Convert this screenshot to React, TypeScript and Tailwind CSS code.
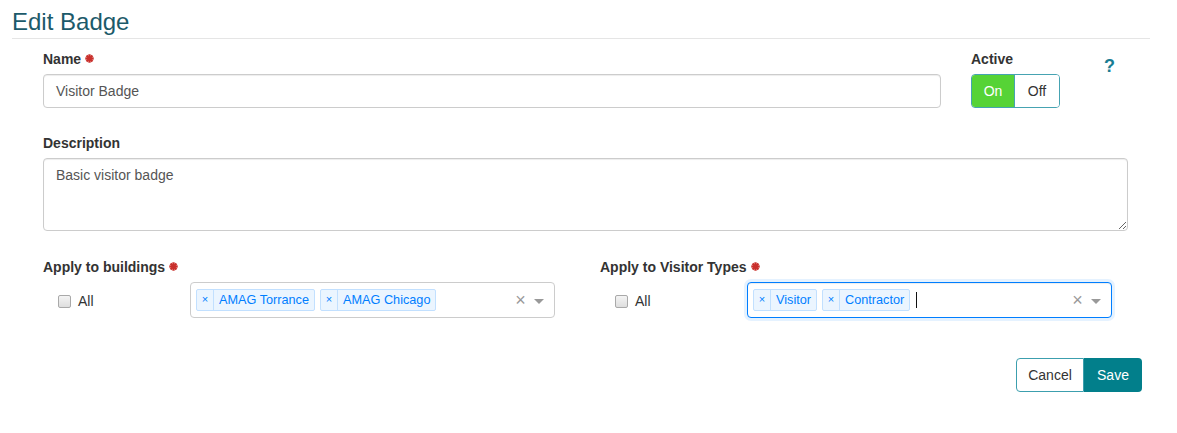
import React from "react";

function Star() {
  return (
    <svg width="9" height="9" viewBox="0 0 10 10" className="inline-block ml-[4px] mb-[1px]">
      <g stroke="#c9302c" strokeWidth="2.6" strokeLinecap="butt">
        <line x1="5" y1="0.3" x2="5" y2="9.7" />
        <line x1="0.3" y1="5" x2="9.7" y2="5" />
        <line x1="1.7" y1="1.7" x2="8.3" y2="8.3" />
        <line x1="8.3" y1="1.7" x2="1.7" y2="8.3" />
      </g>
    </svg>
  );
}

function Label({ children, star }: { children: React.ReactNode; star?: boolean }) {
  return (
    <div className="text-[14px] font-bold leading-[20px] mb-[5px] text-[#333] flex items-center">
      {children}
      {star && <Star />}
    </div>
  );
}

function Tag({ text }: { text: string }) {
  return (
    <div className="flex h-[22px] items-stretch bg-[#ebf5ff] border border-[#c2e0ff] rounded-[2px] text-[#007eff] ml-[5px] text-[12.7px] leading-[20px]">
      <span className="w-[17px] flex items-center justify-center border-r border-[#c2e0ff] text-[11px] pb-[2px]">×</span>
      <span className="px-[5px]">{text}</span>
    </div>
  );
}

function Checkbox() {
  return (
    <div className="w-[13px] h-[13px] rounded-[2px] border border-[#a9a9a9] bg-gradient-to-b from-[#f4f4f4] to-[#dedede]" />
  );
}

function MultiSelect({ tags, focused }: { tags: string[]; focused?: boolean }) {
  return (
    <div
      className={
        focused
          ? "w-[365px] h-[36px] rounded-[4px] border border-[#007eff] bg-white flex items-center shadow-[inset_0_1px_1px_rgba(0,0,0,0.075),0_0_0_3px_rgba(0,126,255,0.1)]"
          : "w-[365px] h-[36px] rounded-[4px] border border-[#ccc] bg-white flex items-center"
      }
    >
      <div className="flex-1 flex items-center">
        {tags.map((t) => (
          <Tag key={t} text={t} />
        ))}
        {focused && <div className="ml-[6px] w-[1px] h-[16px] bg-[#111]" />}
      </div>
      <span className="w-[17px] text-center text-[18px] leading-[18px] text-[#999]">×</span>
      <span className="w-[25px] flex justify-center pr-[5px]">
        <span className="w-0 h-0 border-t-[5px] border-t-[#999] border-x-[5px] border-x-transparent mt-[2px]" />
      </span>
    </div>
  );
}

export default function App() {
  return (
    <div className="w-[1177px] h-[433px] bg-white font-['Liberation_Sans',Arial,sans-serif] text-[#333]">
      <div className="ml-[12px] w-[1138px] border-b border-[#e5e5e5] pt-[8px] pb-[2px] text-[24px] leading-[28px] text-[#1c5a6a]">
        Edit Badge
      </div>
      <div className="pl-[43px] pt-[10px] w-[1142px]">
        <div className="flex">
          <div className="w-[898px]">
            <Label star>Name</Label>
            <div className="h-[34px] border border-[#ccc] rounded-[4px] px-[12px] flex items-center text-[14px] text-[#555] shadow-[inset_0_1px_1px_rgba(0,0,0,0.075)]">
              Visitor Badge
            </div>
          </div>
          <div className="ml-[30px]">
            <Label>Active</Label>
            <div className="flex h-[34px] w-[89px] border border-[#46a3b2] rounded-[4px] overflow-hidden text-[14px]">
              <div className="w-[43px] bg-[#56d336] text-white flex items-center justify-center border-r border-[#46a3b2]">
                On
              </div>
              <div className="flex-1 bg-white text-[#333] flex items-center justify-center">Off</div>
            </div>
          </div>
          <div className="ml-[44px] mt-[7px] text-[18px] font-bold leading-[20px] text-[#1a7d93]">?</div>
        </div>

        <div className="mt-[25px]">
          <Label>Description</Label>
          <textarea
            readOnly
            value="Basic visitor badge"
            className="block w-[1085px] h-[73px] border border-[#ccc] rounded-[4px] px-[12px] py-[6px] text-[14px] leading-[20px] text-[#555] font-['Liberation_Sans',Arial,sans-serif] outline-none resize-y shadow-[inset_0_1px_1px_rgba(0,0,0,0.075)]"
          />
        </div>

        <div className="mt-[26px] flex">
          <div className="w-[557px]">
            <Label star>Apply to buildings</Label>
            <div className="flex items-center">
              <div className="w-[147px] pl-[15px] flex items-center gap-[7px] text-[14px] pt-[2px]">
                <Checkbox />
                <span>All</span>
              </div>
              <MultiSelect tags={["AMAG Torrance", "AMAG Chicago"]} />
            </div>
          </div>
          <div>
            <Label star>Apply to Visitor Types</Label>
            <div className="flex items-center">
              <div className="w-[147px] pl-[15px] flex items-center gap-[7px] text-[14px] pt-[2px]">
                <Checkbox />
                <span>All</span>
              </div>
              <MultiSelect tags={["Visitor", "Contractor"]} focused />
            </div>
          </div>
        </div>

        <div className="mt-[40px] flex justify-end">
          <div className="flex h-[34px] text-[14px]">
            <div className="w-[68px] border border-[#3c9fae] rounded-l-[4px] flex items-center justify-center text-[#333] bg-white">
              Cancel
            </div>
            <div className="w-[58px] bg-[#027f8b] rounded-r-[4px] flex items-center justify-center text-white">
              Save
            </div>
          </div>
        </div>
      </div>
    </div>
  );
}
